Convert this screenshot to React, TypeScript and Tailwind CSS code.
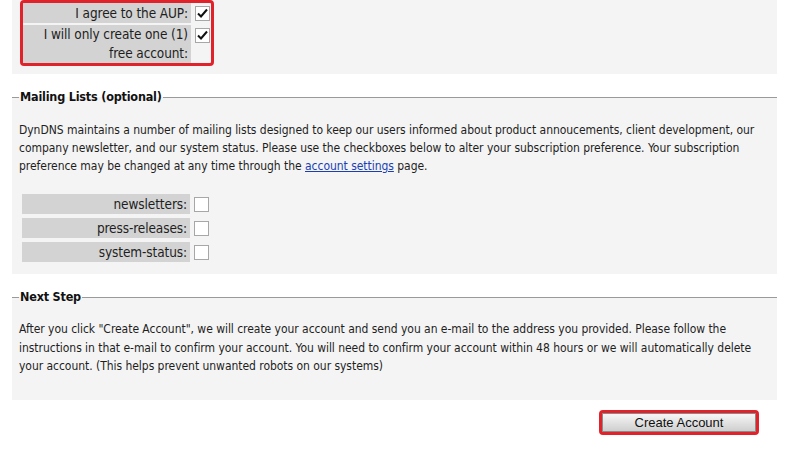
import React from "react";

const font = "font-['DejaVu_Sans_Condensed','DejaVu_Sans',sans-serif]";

function CheckBox({ checked }: { checked?: boolean }) {
  return (
    <span className="flex h-[15px] w-[15px] items-center justify-center border border-[#a7a7a7] bg-white">
      {checked && (
        <svg width="13" height="13" viewBox="0 0 13 13">
          <path d="M2 6.5 L5 9.5 L11 2.5" fill="none" stroke="#111" strokeWidth="2" />
        </svg>
      )}
    </span>
  );
}

function Legend({ title }: { title: string }) {
  return (
    <div className="flex h-[18px] items-center">
      <div className="h-px w-[7px] bg-[#9a9a9a]" />
      <span className="px-[1px] text-[12.5px] font-bold tracking-[-0.2px] text-[#111]">{title}</span>
      <div className="h-px flex-1 bg-[#9a9a9a]" />
    </div>
  );
}

function OptRow({ label, checked }: { label: string; checked?: boolean }) {
  return (
    <div className="flex items-start">
      <div className="w-[168px] bg-[#d3d3d3] pr-[3px] text-right text-[13.5px] leading-[20px] tracking-[-0.1px]">{label}</div>
      <div className="pl-[4px] pt-[3px]">
        <CheckBox checked={checked} />
      </div>
    </div>
  );
}

export default function App() {
  return (
    <div className={`h-[464px] w-[785px] overflow-hidden bg-white text-[12px] tracking-[-0.04px] text-[#1e1e1e] ${font}`}>
      {/* agreement */}
      <div className="ml-[12px] h-[74px] w-[765px] bg-[#f4f4f4] pl-[8px]">
        <div className="flex w-[194px] flex-col gap-[2px] rounded-[4px] border-[3px] border-[#e0232b] pb-0 pt-0">
          <OptRow label="I agree to the AUP:" checked />
          <div className="flex items-start">
            <div className="w-[168px] bg-[#d3d3d3] pr-[3px] text-right text-[13.5px] leading-[19px] tracking-[-0.1px]">
              I will only create one (1)
              <br />
              free account:
            </div>
            <div className="pl-[4px] pt-[3px]">
              <CheckBox checked />
            </div>
          </div>
        </div>
      </div>

      {/* mailing lists */}
      <div className="ml-[12px] mt-[14px] w-[765px]">
        <Legend title="Mailing Lists (optional)" />
        <div className="mt-[-9px] h-[177px] bg-[#f4f4f4] px-[7px] pt-[24px]">
          <p className="leading-[18px]">
            DynDNS maintains a number of mailing lists designed to keep our users informed about product annoucements, client development, our company newsletter, and our system status. Please use the checkboxes below to alter your subscription preference. Your subscription preference may be changed at any time through the{" "}
            <a className="text-[#1a3fb5] underline">account settings</a> page.
          </p>
          <div className="ml-[3px] mt-[19px] flex flex-col gap-[4px]">
            <OptRow label="newsletters:" />
            <OptRow label="press-releases:" />
            <OptRow label="system-status:" />
          </div>
        </div>
      </div>

      {/* next step */}
      <div className="ml-[12px] mt-[14px] w-[765px]">
        <Legend title="Next Step" />
        <div className="mt-[-9px] h-[103px] bg-[#f4f4f4] px-[7px] pt-[23px]">
          <p className="leading-[18.5px]">
            After you click "Create Account", we will create your account and send you an e-mail to the address you provided. Please follow the instructions in that e-mail to confirm your account. You will need to confirm your account within 48 hours or we will automatically delete your account. (This helps prevent unwanted robots on our systems)
          </p>
        </div>
      </div>

      <div className="mt-[10px] flex justify-end pr-[26px]">
        <div className="rounded-[4px] border-[3px] border-[#e0232b] p-0">
          <button className="h-[19px] w-[154px] border border-[#8a8a8a] bg-gradient-to-b from-[#f6f6f6] to-[#cfcfcf] font-['Liberation_Sans',Arial,sans-serif] text-[13px] leading-[17px] tracking-normal text-[#111]">
            Create Account
          </button>
        </div>
      </div>
    </div>
  );
}
